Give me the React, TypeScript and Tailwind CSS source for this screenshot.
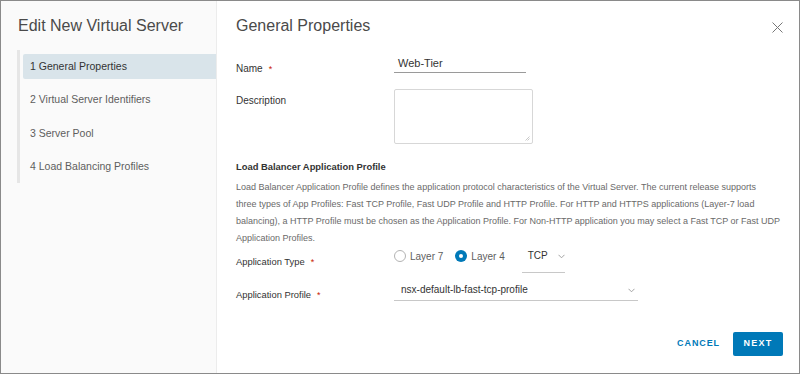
import React from "react";

const F = { fontFamily: '"Liberation Sans", Arial, sans-serif' };

function Star() {
  return <span className="text-[#c92100] ml-[6px] text-[9px]">*</span>;
}

function Chevron({ className = "" }: { className?: string }) {
  return (
    <svg width="7" height="5" viewBox="0 0 7 5" className={className}>
      <path d="M0.5 0.8 L3.5 3.8 L6.5 0.8" stroke="#999" strokeWidth="0.9" fill="none" />
    </svg>
  );
}

export default function App() {
  return (
    <div
      className="w-[800px] h-[374px] border border-[#8a8a8a] bg-white flex overflow-hidden text-[#313131]"
      style={F}
    >
      {/* Left sidebar */}
      <aside className="w-[216px] shrink-0 bg-[#fafafa] border-r border-[#ececec] flex flex-col">
        <h1 className="pl-[17px] pt-[15px] h-[49px] text-[16px] leading-[20px] text-[#4a4a4a] font-normal">
          Edit New Virtual Server
        </h1>
        <div className="ml-[16px] border-l-[3px] border-[#e6e6e6] pt-[4px] pb-[3px] flex flex-col gap-[8.6px]">
          <div className="ml-[3px] h-[25px] bg-[#d9e4ea] rounded-l-[2px] pl-[7px] flex items-center text-[10.5px] text-[#333]">
            1 General Properties
          </div>
          <div className="ml-[3px] h-[25px] pl-[7px] flex items-center text-[10.5px] text-[#5e5e5e]">
            2 Virtual Server Identifiers
          </div>
          <div className="ml-[3px] h-[25px] pl-[7px] flex items-center text-[10.5px] text-[#5e5e5e]">
            3 Server Pool
          </div>
          <div className="ml-[3px] h-[25px] pl-[7px] flex items-center text-[10.5px] text-[#5e5e5e]">
            4 Load Balancing Profiles
          </div>
        </div>
      </aside>

      {/* Main */}
      <main className="flex-1 flex flex-col min-w-0">
        <header className="h-[40px] flex items-start justify-between pl-[19px] pr-[16px]">
          <h2 className="pt-[15px] text-[16px] leading-[20px] text-[#4a4a4a] font-normal">
            General Properties
          </h2>
          <svg width="11" height="11" viewBox="0 0 11 11" className="mt-[21px]">
            <path d="M0.5 0.5 L10.5 10.5 M10.5 0.5 L0.5 10.5" stroke="#777" strokeWidth="1" fill="none" />
          </svg>
        </header>

        <div className="flex h-[275px]">
          <div className="flex-1 pl-[19px] pr-[20px] flex flex-col">
            {/* Name */}
            <div className="flex items-start mt-[13px]">
              <div className="w-[158px] mt-[8px] text-[10px] leading-[14px] text-[#333]">
                Name<Star />
              </div>
              <div className="w-[132px] h-[19px] border-b border-[#9a9a9a] pl-[4px] text-[11px] leading-[18px] text-[#333]">
                Web-Tier
              </div>
            </div>
            {/* Description */}
            <div className="flex items-start mt-[13px]">
              <div className="w-[158px] mt-[5px] text-[10px] leading-[14px] text-[#333]">
                Description
              </div>
              <div className="w-[139px] h-[55px] border border-[#d7d7d7] rounded-[2px] flex items-end justify-end p-[2px]">
                <svg width="5" height="5" viewBox="0 0 5 5">
                  <path d="M4.5 0.5 L0.5 4.5 M4.5 2.5 L2.5 4.5" stroke="#bbb" strokeWidth="0.8" />
                </svg>
              </div>
            </div>
            {/* Section heading */}
            <div className="mt-[16px] text-[9.4px] leading-[14px] font-bold text-[#333]">
              Load Balancer Application Profile
            </div>
            <p className="mt-[5px] text-[9px] leading-[17px] text-[#6a6a6a] whitespace-nowrap">
              Load Balancer Application Profile defines the application protocol characteristics of the Virtual Server. The current release supports
              <br />
              three types of App Profiles: Fast TCP Profile, Fast UDP Profile and HTTP Profile. For HTTP and HTTPS applications (Layer-7 load
              <br />
              balancing), a HTTP Profile must be chosen as the Application Profile. For Non-HTTP application you may select a Fast TCP or Fast UDP
              <br />
              Application Profiles.
            </p>
            {/* Application Type */}
            <div className="flex items-start mt-[0px]">
              <div className="w-[158px] mt-[8px] text-[9.4px] leading-[14px] text-[#333]">
                Application Type<Star />
              </div>
              <div className="flex items-start">
                <label className="flex items-center h-[18px] mt-[0px] text-[10px] text-[#5e5e5e]">
                  <span className="w-[12px] h-[12px] rounded-full border border-[#b3b3b3] bg-white mr-[4px]" />
                  Layer 7
                </label>
                <label className="flex items-center h-[18px] mt-[0px] ml-[12px] text-[10px] text-[#5e5e5e]">
                  <span className="w-[12px] h-[12px] rounded-full bg-[#0079b8] mr-[4px] flex items-center justify-center">
                    <span className="w-[4px] h-[4px] rounded-full bg-white" />
                  </span>
                  Layer 4
                </label>
                <div className="ml-[17px] w-[43px] h-[26px] border-b border-[#c8c8c8] flex items-start pt-[1px] pl-[6px] text-[10px] leading-[16px] text-[#333]">
                  TCP
                  <Chevron className="ml-[10px] mt-[6px]" />
                </div>
              </div>
            </div>
            {/* Application Profile */}
            <div className="flex items-start mt-[9px]">
              <div className="w-[158px] mt-[6px] text-[9.4px] leading-[14px] text-[#333]">
                Application Profile<Star />
              </div>
              <div className="w-[244px] h-[19px] border-b border-[#c8c8c8] flex items-start justify-between pl-[7px] pr-[3px] text-[10px] leading-[16px] text-[#333]">
                nsx-default-lb-fast-tcp-profile
                <Chevron className="mt-[6px]" />
              </div>
            </div>
          </div>
          {/* scrollbar */}
          <div className="w-[11px] mr-[1px] flex flex-col bg-[#f1f1f1]">
            <div className="h-[10px] flex items-center justify-center">
              <svg width="6" height="4" viewBox="0 0 6 4">
                <path d="M0.7 3.3 L3 1 L5.3 3.3" stroke="#555" strokeWidth="1" fill="none" />
              </svg>
            </div>
            <div className="h-[240px] bg-[#c1c1c1]" />
            <div className="flex-1" />
            <div className="h-[10px] flex items-center justify-center">
              <svg width="6" height="4" viewBox="0 0 6 4">
                <path d="M0.7 0.7 L3 3 L5.3 0.7" stroke="#555" strokeWidth="1" fill="none" />
              </svg>
            </div>
          </div>
        </div>

        <footer className="flex-1 flex items-start justify-end pr-[16px] pt-[16px]">
          <button className="h-[24px] px-[13px] text-[9px] tracking-[0.9px] font-semibold text-[#0079b8]">
            CANCEL
          </button>
          <button className="h-[24px] w-[50px] rounded-[2px] bg-[#0079b8] text-white text-[9px] tracking-[1.3px] font-semibold">
            NEXT
          </button>
        </footer>
      </main>
    </div>
  );
}
